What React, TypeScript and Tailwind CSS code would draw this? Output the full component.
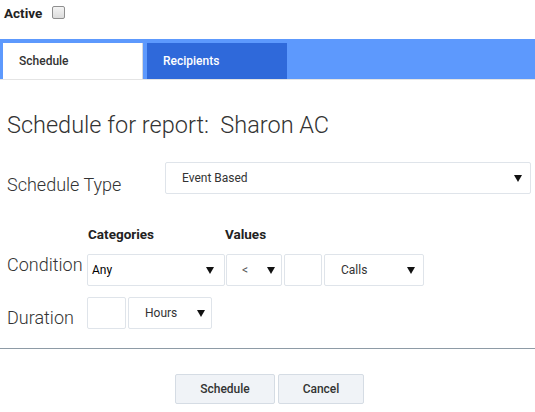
import React from "react";

const Arrow = () => (
  <svg width="8" height="7" viewBox="0 0 8 7" className="shrink-0">
    <path d="M0 0 H8 L4 7 Z" fill="#111" />
  </svg>
);

function Select({
  w,
  text,
  textCls = "text-[#333]",
  pl = "pl-[16px]",
  pr = "pr-[8px]",
}: {
  w: string;
  text: string;
  textCls?: string;
  pl?: string;
  pr?: string;
}) {
  return (
    <div
      className={`${w} shrink-0 h-[32px] border border-[#dfe4ea] rounded-[2px] bg-white flex items-center justify-between ${pl} ${pr}`}
    >
      <span className={`text-[12px] ${textCls}`}>{text}</span>
      <Arrow />
    </div>
  );
}

export default function App() {
  return (
    <div
      className="w-[535px] h-[412px] bg-white overflow-hidden text-[#333]"
      style={{ fontFamily: "Roboto, 'Liberation Sans', sans-serif" }}
    >
      {/* Active */}
      <div className="h-[39px] pl-[4px] pt-[6px] flex items-start">
        <span className="text-[13.5px] font-bold leading-[14px] text-[#222]">Active</span>
        <div className="ml-[10px] w-[13px] h-[13px] rounded-[2px] border border-[#8f8f8f] bg-gradient-to-b from-[#f4f4f4] to-[#dcdcdc]" />
      </div>

      {/* Tabs */}
      <div className="h-[41px] bg-[#5d99fd] pl-[3px] pt-[4px] flex border-b border-[#e4e4e4]">
        <div className="w-[140px] h-[36px] bg-white border-r border-[#d4d8de] flex items-center pl-[16px] text-[12px] font-medium text-[#333]">
          Schedule
        </div>
        <div className="ml-[4px] w-[140px] h-[36px] bg-[#2f69da] flex items-center pl-[16px] text-[12px] font-medium text-white">
          Recipients
        </div>
      </div>

      <div className="pl-[7px]">
        <div className="mt-[30px] h-[30px] flex items-center text-[23.5px] font-light leading-[30px] text-[#333] whitespace-pre">
          Schedule for report:  Sharon AC
        </div>

        <div className="mt-[22px] h-[32px] flex items-start">
          <div className="w-[158px] shrink-0 pt-[12px] text-[18px] font-light leading-[22px] text-[#333]">
            Schedule Type
          </div>
          <Select w="w-[366px]" text="Event Based" />
        </div>

        <div className="mt-[32px] h-[16px] flex text-[13.5px] font-bold leading-[16px] text-[#222]">
          <div className="ml-[81px] w-[137px]">Categories</div>
          <div>Values</div>
        </div>

        <div className="mt-[12px] h-[32px] flex items-start">
          <div className="w-[80px] shrink-0 text-[18px] font-light leading-[22px] text-[#333]">
            Condition
          </div>
          <Select w="w-[138px]" text="Any" textCls="text-black" pl="pl-[4px]" pr="pr-[10px]" />
          <div className="ml-[1px]">
            <Select w="w-[56px]" text="<" textCls="text-[#555] text-[10px]" pl="pl-[15px]" pr="pr-[6px]" />
          </div>
          <div className="ml-[2px] w-[38px] h-[32px] border border-[#dfe4ea] rounded-[2px] bg-white" />
          <div className="ml-[2px]">
            <Select w="w-[100px]" text="Calls" pl="pl-[16px]" pr="pr-[8px]" />
          </div>
        </div>

        <div className="mt-[11px] h-[32px] flex items-start">
          <div className="w-[80px] shrink-0 pt-[10px] text-[18px] font-light leading-[22px] text-[#333]">
            Duration
          </div>
          <div className="w-[39px] h-[32px] border border-[#dfe4ea] rounded-[2px] bg-white" />
          <div className="ml-[2px]">
            <Select w="w-[84px]" text="Hours" pl="pl-[16px]" pr="pr-[6px]" />
          </div>
        </div>
      </div>

      <div className="mt-[19px] h-[1px] bg-[#8e9ba6]" />

      <div className="mt-[25px] flex pl-[175px] gap-[3px]">
        <button className="w-[100px] h-[30px] bg-[#f0f3f7] border border-[#d5dce4] rounded-[2px] text-[12px] font-medium text-[#333]">
          Schedule
        </button>
        <button className="w-[86px] h-[30px] bg-[#f0f3f7] border border-[#d5dce4] rounded-[2px] text-[12px] font-medium text-[#333]">
          Cancel
        </button>
      </div>
    </div>
  );
}
